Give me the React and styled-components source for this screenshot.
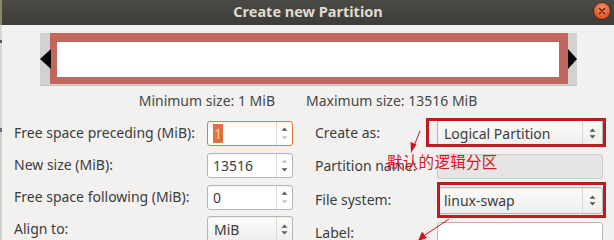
import React from 'react';
import styled, { createGlobalStyle } from 'styled-components';

const Global = createGlobalStyle`
  html, body { margin: 0; padding: 0; background: #f2f1f0; }
  body { font-family: "Noto Sans", "Open Sans", sans-serif; }
  #root { width: 614px; height: 240px; overflow: hidden; }
`;

const Page = styled.div`
  position: relative;
  display: flex;
  width: 614px;
  height: 240px;
  overflow: hidden;
`;

const EdgeStrip = styled.div`
  flex: none;
  width: 2px;
  background: linear-gradient(
    #8a8766 0 25px,
    #d6d6d3 25px 40px,
    #5a5a5a 40px 43px,
    #d6d6d3 43px 128px,
    #6d6d6d 128px 132px,
    #cfcfcc 132px
  );
`;

const Dialog = styled.div`
  flex: 1;
  min-width: 0;
  display: flex;
  flex-direction: column;
  background: #f2f1f0;
  color: #3c3c3c;
`;

const TitleBar = styled.div`
  flex: none;
  height: 25px;
  display: grid;
  grid-template-columns: 1fr auto 1fr;
  align-items: center;
  background: linear-gradient(#4b4a45, #3d3c38);
`;

const Title = styled.div`
  grid-column: 2;
  font-weight: 700;
  font-size: 14.5px;
  color: #dfdbd2;
  margin-top: -3px;
`;

const CloseButton = styled.div`
  grid-column: 3;
  justify-self: end;
  align-self: start;
  margin: 3px 4px 0 0;
  width: 16px;
  height: 16px;
  border-radius: 50%;
  background: radial-gradient(circle at 50% 35%, #f69266, #e75c2b 60%, #c9471c);
  box-shadow: 0 0 0 1px #3a2a22;
  display: flex;
  align-items: center;
  justify-content: center;
`;

const Frame = styled.div`
  flex: none;
  align-self: center;
  width: 537px;
  height: 51px;
  margin-top: 8px;
  display: flex;
  align-items: stretch;
  background: #d2d2d1;
  border-bottom: 1px solid #c4c4c2;
  padding-bottom: 1px;
`;

const ArrowSlot = styled.div`
  flex: none;
  width: ${(p) => p.$w}px;
  display: flex;
  align-items: center;
  justify-content: ${(p) => (p.$side === 'left' ? 'flex-end' : 'flex-start')};
  margin-right: ${(p) => (p.$side === 'left' ? '-1px' : '0')};
  position: relative;
  z-index: 1;
`;

const Triangle = styled.div`
  width: 0;
  height: 0;
  border-top: 10px solid transparent;
  border-bottom: 10px solid transparent;
  ${(p) =>
    p.$dir === 'left'
      ? 'border-right: 11px solid #050505;'
      : 'border-left: 9px solid #050505;'}
`;

const PartitionBox = styled.div`
  flex: 1;
  background: #ffffff;
  border-style: solid;
  border-color: #c1675e;
  border-width: 9px 9px 7px 7px;
`;

const SizeRow = styled.div`
  flex: none;
  display: flex;
  justify-content: center;
  gap: 31px;
  margin-top: 5px;
  height: 20px;
  line-height: 20px;
  font-size: 14px;
  color: #474747;
`;

const Form = styled.div`
  flex: none;
  display: flex;
  margin-top: 6px;
  padding-left: 12px;
`;

const FieldGrid = styled.div`
  display: grid;
  grid-template-columns: ${(p) => p.$cols};
  grid-template-rows: ${(p) => p.$rows};
  align-items: center;
  margin-left: ${(p) => p.$gap || 0}px;
`;

const Label = styled.div`
  font-size: 14px;
  line-height: 18px;
  color: #3c3c3c;
  white-space: nowrap;
`;

const Spin = styled.div`
  height: ${(p) => p.$h || 25}px;
  box-sizing: border-box;
  display: flex;
  align-items: stretch;
  border: 1px solid ${(p) => (p.$focus ? '#e2773f' : '#b7b6b2')};
  border-radius: 3px;
  background: ${(p) =>
    p.$combo ? 'linear-gradient(#fbfbfa, #efeeec)' : '#ffffff'};
  box-shadow: inset 0 1px 1px rgba(0, 0, 0, 0.05);
`;

const SpinText = styled.div`
  flex: 1;
  display: flex;
  align-items: center;
  padding-left: ${(p) => p.$pad || 5}px;
  font-size: 14px;
  color: #3c3c3c;
`;

const Selected = styled.span`
  background: #e2703c;
  color: #f7cdb4;
  padding: 0 1px;
  line-height: 19px;
`;

const SpinButtons = styled.div`
  flex: none;
  width: ${(p) => p.$w || 15}px;
  border-left: 1px solid ${(p) => p.$sep || '#dcdbd8'};
  display: flex;
  flex-direction: column;
  align-items: center;
  justify-content: center;
  gap: ${(p) => p.$gap ?? 5}px;
`;

const Entry = styled.div`
  height: ${(p) => p.$h}px;
  box-sizing: border-box;
  border: 1px solid ${(p) => (p.$disabled ? '#cdccc9' : '#b8b7b3')};
  border-radius: 3px;
  background: ${(p) => (p.$disabled ? '#e6e5e3' : '#ffffff')};
  align-self: ${(p) => p.$align || 'center'};
`;

const Mark = styled.div`
  position: absolute;
  box-sizing: border-box;
  border: 3px solid #bf1a20;
  pointer-events: none;
`;

const Note = styled.div`
  position: absolute;
  left: 387px;
  top: 151px;
  font-family: "Noto Sans CJK SC", "Noto Sans", sans-serif;
  font-size: 15.5px;
  line-height: 20px;
  color: #d41a1f;
  letter-spacing: 0.3px;
  pointer-events: none;
`;

const Overlay = styled.svg`
  position: absolute;
  left: 0;
  top: 0;
  pointer-events: none;
`;

function Arrow({ dir, color }) {
  return (
    <svg width="7" height="4" viewBox="0 0 7 4">
      {dir === 'up' ? (
        <path d="M0.5 3.8 L3.5 0.5 L6.5 3.8 Z" fill={color} />
      ) : (
        <path d="M0.5 0.2 L3.5 3.5 L6.5 0.2 Z" fill={color} />
      )}
    </svg>
  );
}

function SpinBox({ value, focus, combo, upColor = '#5a5a5a', downColor = '#5a5a5a', h }) {
  return (
    <Spin $focus={focus} $combo={combo} $h={h}>
      <SpinText $pad={combo ? 6 : 5}>{value}</SpinText>
      <SpinButtons $gap={combo ? 3 : 5}>
        <Arrow dir="up" color={upColor} />
        <Arrow dir="down" color={downColor} />
      </SpinButtons>
    </Spin>
  );
}

function Combo({ value }) {
  return (
    <Spin $combo $h={27}>
      <SpinText $pad={6}>{value}</SpinText>
      <SpinButtons $w={19} $gap={3} $sep="#d8d7d4">
        <Arrow dir="up" color="#555" />
        <Arrow dir="down" color="#555" />
      </SpinButtons>
    </Spin>
  );
}

export default function App() {
  return (
    <>
      <Global />
      <Page>
        <EdgeStrip />
        <Dialog>
          <TitleBar>
            <Title>Create new Partition</Title>
            <CloseButton>
              <svg width="8" height="8" viewBox="0 0 8 8">
                <path d="M1.5 1.5 L6.5 6.5 M6.5 1.5 L1.5 6.5" stroke="#4a2416" strokeWidth="1.4" strokeLinecap="round" />
              </svg>
            </CloseButton>
          </TitleBar>

          <Frame>
            <ArrowSlot $side="left" $w={11}>
              <Triangle $dir="left" />
            </ArrowSlot>
            <PartitionBox />
            <ArrowSlot $side="right" $w={9}>
              <Triangle $dir="right" />
            </ArrowSlot>
          </Frame>

          <SizeRow>
            <span>Minimum size: 1 MiB</span>
            <span>Maximum size: 13516 MiB</span>
          </SizeRow>

          <Form>
            <FieldGrid $cols="193px 86px" $rows="32px 32px 32px 32px">
              <Label>Free space preceding (MiB):</Label>
              <SpinBox value={<Selected>1</Selected>} focus downColor="#c4c4c2" />
              <Label>New size (MiB):</Label>
              <SpinBox value="13516" upColor="#c4c4c2" />
              <Label>Free space following (MiB):</Label>
              <SpinBox value="0" downColor="#c4c4c2" />
              <Label>Align to:</Label>
              <SpinBox value="MiB" combo h={27} />
            </FieldGrid>

            <FieldGrid $cols="122px 166px" $rows="32px 34px 34px 32px" $gap={22}>
              <Label>Create as:</Label>
              <Combo value="Logical Partition" />
              <Label>Partition name:</Label>
              <Entry $h={25} $disabled />
              <Label>File system:</Label>
              <Combo value="linux-swap" />
              <Label>Label:</Label>
              <Entry $h={27} $align="end" />
            </FieldGrid>
          </Form>
        </Dialog>

        <Mark style={{ left: 426, top: 118, width: 180, height: 29 }} />
        <Mark style={{ left: 437, top: 182, width: 169, height: 36 }} />
        <Note>默认的逻辑分区</Note>
        <Overlay width="614" height="240" viewBox="0 0 614 240">
          <line x1="420" y1="131" x2="414" y2="146" stroke="#c8161c" strokeWidth="1" />
          <path d="M411 153 L410.5 142 L416.5 144.5 Z" fill="#c8161c" />
          <line x1="449" y1="219" x2="425" y2="235" stroke="#c8161c" strokeWidth="1" />
          <path d="M418 241 L422 231.5 L427 238 Z" fill="#c8161c" />
        </Overlay>
      </Page>
    </>
  );
}
